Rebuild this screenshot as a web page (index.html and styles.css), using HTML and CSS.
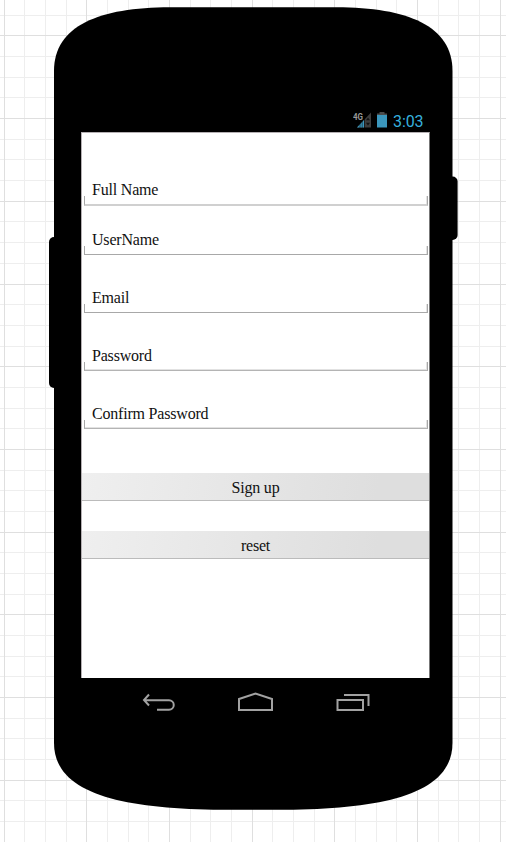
FILE: index.html
```html
<!DOCTYPE html>
<html lang="en">
<head>
<meta charset="utf-8">
<title>Sign up</title>
<link rel="stylesheet" href="styles.css">
</head>
<body>
<main class="canvas">
  <svg class="backdrop" width="506" height="842" viewBox="0 0 506 842" aria-hidden="true">
    <path class="grid-minor" d="M24.5 0v842M45.5 0v842M66.5 0v842M107.5 0v842M128.5 0v842M148.5 0v842M190.5 0v842M210.5 0v842M231.5 0v842M272.5 0v842M293.5 0v842M314.5 0v842M355.5 0v842M376.5 0v842M396.5 0v842M438.5 0v842M458.5 0v842M479.5 0v842M0 15.5h506M0 56.5h506M0 77.5h506M0 97.5h506M0 139.5h506M0 159.5h506M0 180.5h506M0 221.5h506M0 242.5h506M0 263.5h506M0 304.5h506M0 325.5h506M0 346.5h506M0 387.5h506M0 408.5h506M0 428.5h506M0 470.5h506M0 490.5h506M0 511.5h506M0 552.5h506M0 573.5h506M0 594.5h506M0 635.5h506M0 656.5h506M0 676.5h506M0 718.5h506M0 738.5h506M0 759.5h506M0 800.5h506M0 821.5h506"/>
    <path class="grid-major" d="M4.5 0v842M86.5 0v842M169.5 0v842M252.5 0v842M334.5 0v842M417.5 0v842M500.5 0v842M0 35.5h506M0 118.5h506M0 201.5h506M0 284.5h506M0 366.5h506M0 449.5h506M0 532.5h506M0 614.5h506M0 697.5h506M0 780.5h506"/>
    <path d="M54 71C54 26 99 7.3 170 7.3H336.5C407.500 7.300 452.500 26 452.500 71V743C452.500 795 381.500 809.800 276.500 809.800H230C125 809.800 54 795 54 743Z"/>
    <rect x="49" y="237" width="14" height="151" rx="5"/>
    <rect x="444" y="176.500" width="13.600" height="63.500" rx="5"/>
  </svg>
  <section class="phone">
    <header class="status">
      <svg width="34" height="18" viewBox="0 0 34 18" aria-hidden="true">
        <path d="M18 2.500V17.500H4Z" fill="#3d3d3d"/>
        <path d="M4 17.500 11 10V17.500Z" fill="#3b97bd"/>
        <path d="M7 12v6M9.200 11v7M11.500 6v12" stroke="#000" stroke-width=".5"/>
        <path d="M15 7.500 17 10.300H13ZM15 15.500 17 12.700H13Z" fill="#111"/>
        <rect x="0" y="1" width="10" height="9" fill="#000"/>
        <text x="0" y="10" class="network" textLength="10" lengthAdjust="spacingAndGlyphs">4G</text>
        <path d="M26.500 2h5v1.500H34V6H24V3.500h2.500Z" fill="#4b4b4b"/>
        <path d="M24 5h10v12.500H24Z" fill="#3b97bd"/>
      </svg>
      <span class="clock">3:03</span>
    </header>
    <form class="screen">
      <div class="field first"><span>Full Name</span></div>
      <div class="field second"><span>UserName</span></div>
      <div class="field"><span>Email</span></div>
      <div class="field soft"><span>Password</span></div>
      <div class="field soft"><span>Confirm Password</span></div>
      <div class="actions">
        <button type="button">Sign up</button>
        <button type="button">reset</button>
      </div>
    </form>
    <nav class="keys">
      <svg width="33" height="20" viewBox="0 0 33 20" aria-label="Back">
        <path d="M7 2.500 2 8 7 13.500M2 8.300H27A4.700 4.700 0 0 1 27 17.800H15"/>
      </svg>
      <svg width="35" height="20" viewBox="0 0 35 20" aria-label="Home">
        <path d="M1 7 17.500 1.500 34 7V18H1Z"/>
      </svg>
      <svg width="35" height="20" viewBox="0 0 35 20" aria-label="Recent apps">
        <path d="M1.500 8H27V18H1.500ZM8 3H32.500V14"/>
      </svg>
    </nav>
  </section>
</main>
</body>
</html>
```

FILE: styles.css
```css
* { box-sizing: border-box; }
body { margin: 0; background: #fff; }
.canvas {
  position: relative;
  width: 506px;
  height: 842px;
  overflow: hidden;
}
.backdrop { position: absolute; inset: 0; }
.grid-minor, .grid-major { fill: none; shape-rendering: crispEdges; }
.grid-minor { stroke: #eee; }
.grid-major { stroke: #dfdfdf; }
.phone {
  position: relative;
  width: 349px;
  margin-left: 81px;
  padding-top: 110px;
}
.status {
  display: flex;
  height: 22px;
  align-items: flex-start;
  padding-left: 272px;
  gap: 6px;
}
.network { font: bold 9.5px Roboto, sans-serif; fill: #999; }
.clock { font: 16px/24px Roboto, sans-serif; letter-spacing: -0.1px; color: #36b0de; }
.screen {
  height: 546px;
  background: #fff;
  border: solid #b5b0b3;
  border-width: 1px 1px 0 1px;
  border-right-color: #777;
  font: 16px/20px "Liberation Serif", serif;
  letter-spacing: -0.2px;
  color: #111;
}
.field {
  position: relative;
  display: flex;
  height: 58px;
  padding: 33px 0 0 10px;
  align-items: flex-start;
}
.field.first { height: 73px; padding-top: 47px; }
.field.second { height: 49px; padding-top: 24px; }
.field::after {
  content: "";
  position: absolute;
  left: 2px;
  right: 1px;
  bottom: 0;
  height: 8px;
  border: solid #a8a8a8;
  border-width: 0 1px 1px;
  box-shadow: inset -1px 0 #e2e2e2;
}
.field.first::after {
  border-bottom: 2px solid #d0d0d0;
}
.field.soft::after {
  border-bottom-color: #b4b4b4;
  box-shadow: inset -1px -1px #e2e2e2;
}
.actions {
  display: flex;
  flex-direction: column;
  gap: 30px;
  padding-top: 44px;
}
.actions button {
  height: 28px;
  padding: 2px 0 0;
  border: 0;
  border-bottom: 1px solid #bbb;
  background: linear-gradient(100deg, #efefef, #dedede 85%);
  font: inherit;
  letter-spacing: inherit;
  color: inherit;
}
.keys {
  display: flex;
  padding: 14px 0 0 61px;
  gap: 63px;
}
.keys path { fill: none; stroke: #a2a2a2; stroke-width: 2; }
```
